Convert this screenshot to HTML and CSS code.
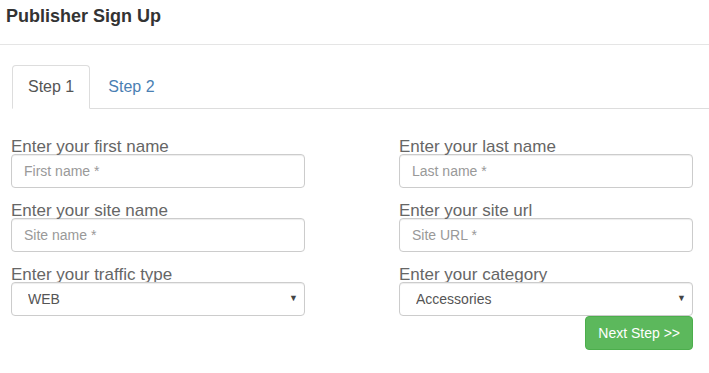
FILE: index.html
```html
<!DOCTYPE html>
<html lang="en">
<head>
<meta charset="UTF-8">
<meta name="viewport" content="width=device-width, initial-scale=1.0">
<title>Publisher Sign Up</title>
<link rel="stylesheet" href="styles.css">
</head>
<body>

<div class="header">Publisher Sign Up</div>

<ul class="tabs">
    <li class="tab active"><a href="#">Step 1</a></li>
    <li class="tab"><a href="#">Step 2</a></li>
</ul>

<form class="form">
    <div class="field">
        <label>Enter your first name</label>
        <input type="text" placeholder="First name *">
    </div>
    <div class="field">
        <label>Enter your last name</label>
        <input type="text" placeholder="Last name *">
    </div>
    <div class="field">
        <label>Enter your site name</label>
        <input type="text" placeholder="Site name *">
    </div>
    <div class="field">
        <label>Enter your site url</label>
        <input type="text" placeholder="Site URL *">
    </div>
    <div class="field">
        <label>Enter your traffic type</label>
        <div class="select-wrap">
            <select>
                <option>WEB</option>
                <option>MOBILE</option>
            </select>
        </div>
    </div>
    <div class="field">
        <label>Enter your category</label>
        <div class="select-wrap">
            <select>
                <option>Accessories</option>
                <option>Apparel</option>
            </select>
        </div>
        <div class="actions">
            <button type="button" class="btn-next">Next Step &gt;&gt;</button>
        </div>
    </div>
</form>

</body>
</html>
```

FILE: styles.css
```css
body {
    font-family: 'Liberation Sans', Arial, sans-serif;
    background-color: #fff;
    color: #555;
    margin: 0;
}

.header {
    height: 39px;
    padding: 5px 6px 0;
    font-size: 18px;
    line-height: 22px;
    font-weight: bold;
    color: #333;
    border-bottom: 1px solid #e5e5e5;
}

.tabs {
    list-style: none;
    margin: 20px 0 0 12px;
    padding: 0;
    display: flex;
    border-bottom: 1px solid #ddd;
}

.tab {
    margin-right: 2px;
    margin-bottom: -1px;
}

.tab a {
    display: block;
    padding: 10px 15px;
    font-size: 16px;
    line-height: 22px;
    color: #4a7fb3;
    text-decoration: none;
    border: 1px solid transparent;
    border-radius: 4px 4px 0 0;
}

.tab.active a {
    color: #555;
    background-color: #fff;
    border-color: #ddd;
    border-bottom-color: transparent;
}

.form {
    display: grid;
    grid-template-columns: 294px 294px;
    column-gap: 94px;
    padding: 27px 0 0 11px;
}

.field {
    margin-bottom: 12px;
}

.field label {
    display: block;
    padding-top: 4px;
    font-size: 17px;
    line-height: 14px;
    color: #666;
}

.field input,
.field select {
    display: block;
    box-sizing: border-box;
    width: 100%;
    height: 34px;
    padding: 6px 12px;
    font-family: inherit;
    font-size: 14px;
    color: #555;
    background-color: #fff;
    border: 1px solid #ccc;
    border-radius: 4px;
    box-shadow: inset 0 1px 1px rgba(0, 0, 0, 0.075);
}

.field input::placeholder {
    color: #999;
}

.select-wrap {
    position: relative;
}

.field select {
    appearance: none;
    -webkit-appearance: none;
    padding-left: 16px;
}

.select-wrap::after {
    content: '\25BC';
    position: absolute;
    right: 7px;
    top: 11px;
    font-size: 9px;
    color: #444;
    pointer-events: none;
}

.actions {
    display: flex;
    justify-content: flex-end;
}

.btn-next {
    height: 34px;
    padding: 6px 12px;
    font-family: inherit;
    font-size: 14px;
    color: #fff;
    background-color: #5cb85c;
    border: 1px solid #4cae4c;
    border-radius: 4px;
    cursor: pointer;
}
```
